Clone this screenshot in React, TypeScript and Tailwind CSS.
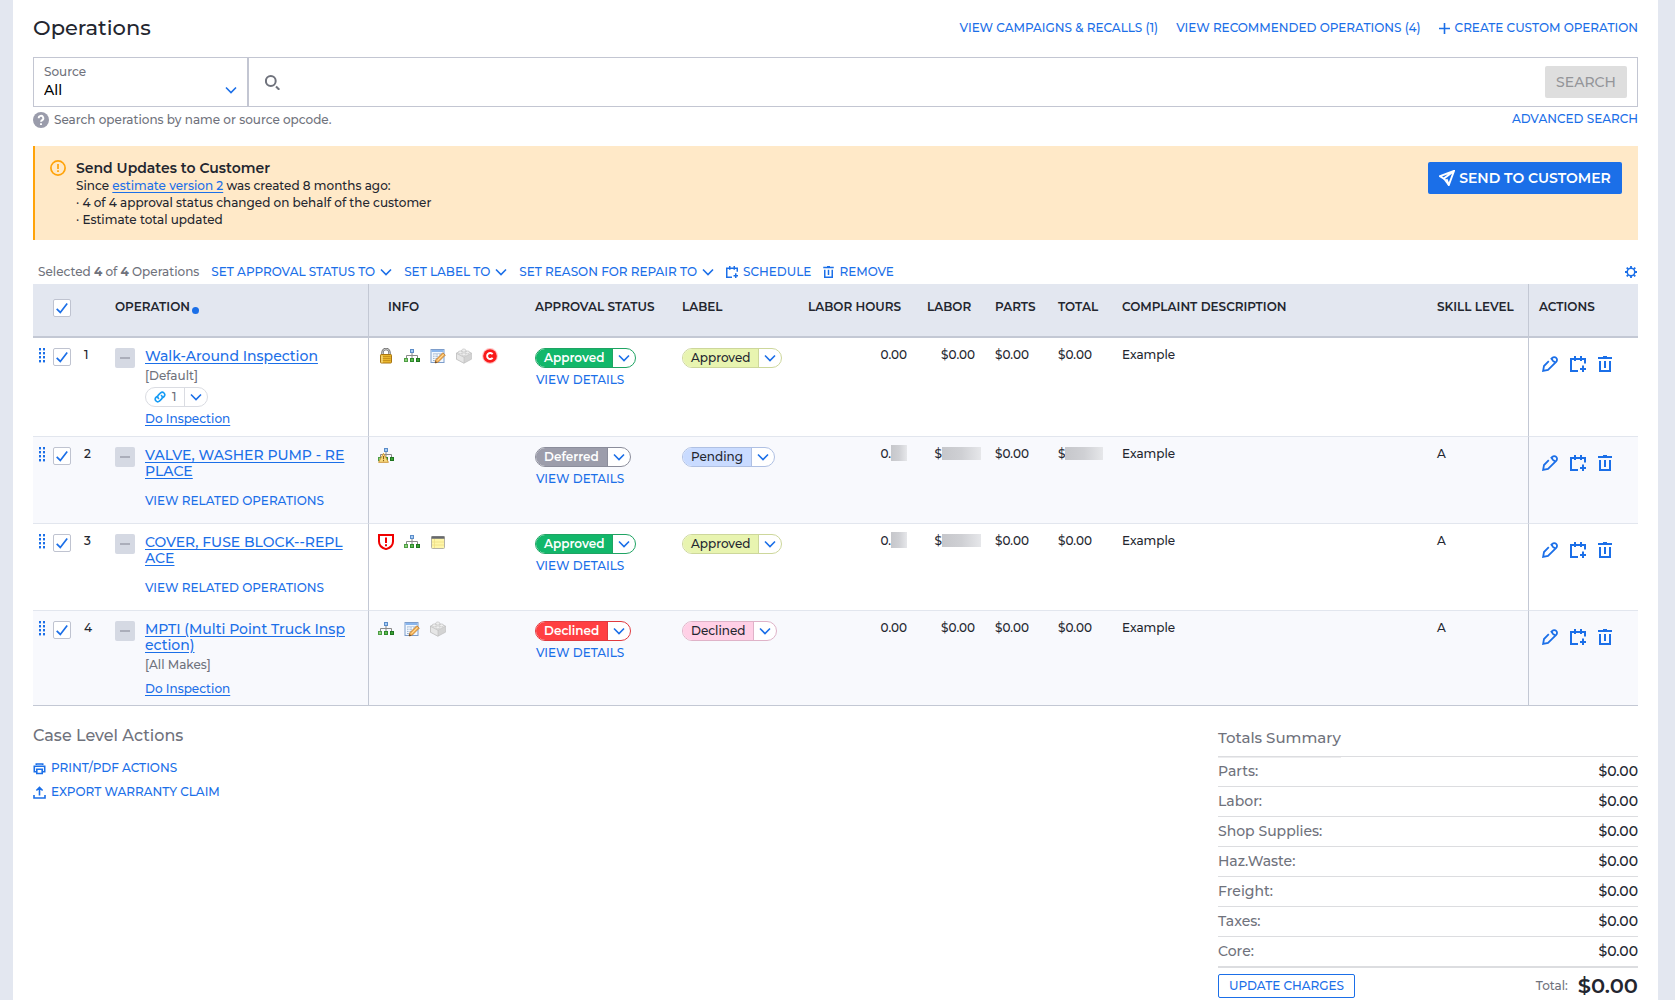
import React from "react";
import clsx from "clsx";

type InfoIcon = "lock" | "tree" | "treeWarning" | "form" | "brick" | "copyright" | "shield" | "note";
type Tone = "green" | "gray" | "red" | "lime" | "blue" | "pink";

interface Operation {
  id: number;
  title: string[];
  make?: string;
  linked?: number;
  inspection?: boolean;
  related?: boolean;
  icons: InfoIcon[];
  status: string;
  statusTone: Tone;
  label: string;
  labelTone: Tone;
  hours: string;
  labor: string;
  parts: string;
  total: string;
  skill: string;
}

const operations: Operation[] = [
  {
    id: 1,
    title: ["Walk-Around Inspection"],
    make: "[Default]",
    linked: 1,
    inspection: true,
    icons: ["lock", "tree", "form", "brick", "copyright"],
    status: "Approved",
    statusTone: "green",
    label: "Approved",
    labelTone: "lime",
    hours: "0.00",
    labor: "$0.00",
    parts: "$0.00",
    total: "$0.00",
    skill: "",
  },
  {
    id: 2,
    title: ["VALVE, WASHER PUMP - RE", "PLACE"],
    related: true,
    icons: ["treeWarning"],
    status: "Deferred",
    statusTone: "gray",
    label: "Pending",
    labelTone: "blue",
    hours: "0.",
    labor: "$",
    parts: "$0.00",
    total: "$",
    skill: "A",
  },
  {
    id: 3,
    title: ["COVER, FUSE BLOCK--REPL", "ACE"],
    related: true,
    icons: ["shield", "tree", "note"],
    status: "Approved",
    statusTone: "green",
    label: "Approved",
    labelTone: "lime",
    hours: "0.",
    labor: "$",
    parts: "$0.00",
    total: "$0.00",
    skill: "A",
  },
  {
    id: 4,
    title: ["MPTI (Multi Point Truck Insp", "ection)"],
    make: "[All Makes]",
    inspection: true,
    icons: ["tree", "form", "brick"],
    status: "Declined",
    statusTone: "red",
    label: "Declined",
    labelTone: "pink",
    hours: "0.00",
    labor: "$0.00",
    parts: "$0.00",
    total: "$0.00",
    skill: "A",
  },
];

const charges = ["Parts:", "Labor:", "Shop Supplies:", "Haz.Waste:", "Freight:", "Taxes:", "Core:"];

const tones: Record<Tone, { border: string; fill: string }> = {
  green: { border: "border-[#1fa463]", fill: "bg-[#12b76a] text-white border-[#1fa463] font-semibold" },
  gray: { border: "border-[#8b8d9b]", fill: "bg-[#9c9dab] text-white border-[#8b8d9b] font-semibold" },
  red: { border: "border-[#e0393f]", fill: "bg-[#ff3f42] text-white border-[#e0393f] font-semibold" },
  lime: { border: "border-[#cdd79b]", fill: "bg-[#e8f4b0] text-[#23262f] border-[#cdd79b]" },
  blue: { border: "border-[#afc0e3]", fill: "bg-[#c9dbff] text-[#23262f] border-[#afc0e3]" },
  pink: { border: "border-[#dfb3c8]", fill: "bg-[#ffd0e6] text-[#23262f] border-[#dfb3c8]" },
};

const Chevron = ({ className }: { className?: string }) => (
  <svg viewBox="0 0 12 12" className={clsx("w-3 h-3 flex-none", className)} fill="none" stroke="#1b6fe8" strokeWidth="1.6">
    <path d="M1 3.5 6 8.5 11 3.5" />
  </svg>
);

const EditIcon = () => (
  <svg viewBox="0 0 16 16" className="w-4 h-4" fill="none" stroke="currentColor" strokeWidth="1.8">
    <path d="M6.8 5.2 2 10 1.1 14.9 6 14l8.2-8.2a2.7 2.7 0 0 0 0-3.9 2.7 2.7 0 0 0-3.9 0L8.8 3.4" />
    <path d="M9.8 2.6c.4 2 1.6 3.2 3.6 3.6" />
  </svg>
);

const CalendarIcon = ({ className }: { className?: string }) => (
  <svg viewBox="0 0 16 16" className={className} fill="none" stroke="currentColor" strokeWidth="2">
    <path d="M8 15H1V3h14v4.5M5 0v5M11 0v5" />
    <path d="M13 9.5v6.5M10 13h6" />
  </svg>
);

const TrashIcon = ({ className }: { className?: string }) => (
  <svg viewBox="0 0 14 16" className={className} fill="none" stroke="currentColor" strokeWidth="2">
    <path d="M0 2h14M5 1h4M2 5v10h10V5M7 5v7" />
  </svg>
);

// 16px coloured icons shown in the Info column
const InfoGlyph = ({ name }: { name: InfoIcon }) => {
  const box = { viewBox: "0 0 16 16", className: "w-4 h-4" };
  switch (name) {
    case "lock":
      return (
        <svg {...box}>
          <path d="M4.500 8V4.500a3.500 3.500 0 0 1 7 0V8" fill="none" stroke="#6c6c6c" strokeWidth="2.4" />
          <path d="M4.500 8V4.500a3.500 3.500 0 0 1 7 0V8" fill="none" stroke="#d4d4d4" strokeWidth=".9" />
          <rect x="2.5" y="6.5" width="11" height="8.5" rx=".8" fill="#e9b62c" stroke="#a87512" />
          <path d="M3.5 8.5h9M3.5 10.5h9M3.5 12.5h9" stroke="#c8921a" />
          <path d="M4 7.5v7" stroke="#fae08a" strokeWidth="1.4" />
        </svg>
      );
    case "tree":
    case "treeWarning":
      return (
        <svg {...box}>
          <path d="M8 5v3M2.5 10V7.5h11V10M8 7v3" fill="none" stroke="#8a8a8a" />
          <rect x="6.5" y="1.5" width="3" height="3" fill="#a6cdf7" stroke="#5b8cc8" />
          <rect x=".5" y="10.5" width="3" height="3" fill="#8fd07c" stroke="#4e9e45" />
          <rect x="6.5" y="10.5" width="3" height="3" fill="#5fbb52" stroke="#2f8a2c" />
          <rect x="12.5" y="10.5" width="3" height="3" fill="#3ba233" stroke="#1f7420" />
          {name === "treeWarning" && (
            <>
              <path d="M5.500 6.300 10.400 15.300H.6Z" fill="#f8dc83" stroke="#cf983a" strokeLinejoin="round" />
              <path d="M5.500 9v3.200M5.500 13v1.200" stroke="#8a5f14" strokeWidth="1.1" />
            </>
          )}
        </svg>
      );
    case "form":
      return (
        <svg {...box}>
          <rect x="1" y="1.5" width="13" height="13" fill="#f2f8ff" stroke="#7d9dcb" />
          <path d="M1.5 3h12" stroke="#8ab6ee" strokeWidth="2" />
          <path d="M3 6h9M3 8.2h9M3 10.4h8M3 12.5h5" stroke="#9bb1cd" />
          <path d="M5 6v6.5M8.5 6v5" stroke="#fff" strokeWidth=".8" />
          <path d="m5 15 .8-3.200 7-7 2.500 2.300-7 7Z" fill="#f6b45a" stroke="#b8762a" strokeWidth=".8" />
          <path d="m7.5 12.5 6-6" stroke="#ffe0a0" strokeWidth=".9" />
          <path d="m5 15 .6-2 1.5 1.4Z" fill="#4d3b28" />
        </svg>
      );
    case "brick":
      return (
        <svg {...box} strokeWidth=".5" stroke="#b4b4b4">
          <path d="M.5 5.200 7.500 2l8 3.200v6L8 15.200.5 11.200Z" fill="#d3d3d3" />
          <path d="M.5 5.200 8 9v6.200L.5 11.200Z" fill="#e6e6e6" />
          <path d="m.5 5.200 7-3 8 3L8 9Z" fill="#f4f4f4" />
          <ellipse cx="7.800" cy="2.500" rx="2" ry="1.600" fill="#eee" />
          <ellipse cx="4.200" cy="4.400" rx="2" ry="1.500" fill="#eee" />
          <ellipse cx="11.600" cy="4.400" rx="2" ry="1.500" fill="#eee" />
          <ellipse cx="7.900" cy="6.400" rx="2" ry="1.500" fill="#eee" />
        </svg>
      );
    case "copyright":
      return (
        <svg {...box}>
          <circle cx="8" cy="8" r="7.900" fill="#ffc4c4" />
          <circle cx="8" cy="8" r="6.800" fill="#f91a1a" />
          <path d="M10.600 6.300A3 3 0 1 0 10.600 9.700" fill="none" stroke="#fff" strokeWidth="1.900" />
        </svg>
      );
    case "shield":
      return (
        <svg {...box} fill="none" stroke="#f00000">
          <path d="M1 1h14v6.500c0 4-3 6.500-7 7.600-4-1.100-7-3.600-7-7.600Z" strokeWidth="2" />
          <path d="M8 3.500v5.500M8 10.200v2" strokeWidth="2" />
        </svg>
      );
    case "note":
      return (
        <svg {...box}>
          <rect x="1.500" y="2.500" width="13" height="12" rx="1" fill="#fff6a8" stroke="#b5b2a5" />
          <path d="M1.500 3.500h13" stroke="#66686f" strokeWidth="2.500" />
          <path d="M2 8h12M2 11h12M4.500 5v9" stroke="#efdf86" strokeWidth=".8" />
        </svg>
      );
  }
};

const Checkbox = ({ label }: { label: string }) => (
  <label className="inline-grid w-[18px] h-[18px] flex-none">
    <input
      type="checkbox"
      defaultChecked
      aria-label={label}
      className="peer col-start-1 row-start-1 appearance-none w-[18px] h-[18px] border border-[#bfc3d0] rounded-[2px] bg-white"
    />
    <svg
      viewBox="0 0 18 18"
      className="col-start-1 row-start-1 w-[18px] h-[18px] pointer-events-none invisible peer-checked:visible"
      fill="none"
      stroke="#1b6fe8"
      strokeWidth="1.7"
    >
      <path d="m3.700 9.800 3.600 3.600L14.200 4.400" />
    </svg>
  </label>
);

const DragHandle = () => (
  <svg viewBox="0 0 6 15" className="w-1.5 h-[15px]" fill="#1b6fe8">
    {[0, 4, 8, 12].map((y) => (
      <React.Fragment key={y}>
        <rect x="0" y={y} width="2" height="2.400" />
        <rect x="4" y={y} width="2" height="2.400" />
      </React.Fragment>
    ))}
  </svg>
);

const Pill = ({ text, tone }: { text: string; tone: Tone }) => (
  <div className={clsx("inline-flex h-5 border rounded-full overflow-hidden bg-white align-top", tones[tone].border)}>
    <span className={clsx("px-2 border-r text-[12px] leading-[17px]", tones[tone].fill)}>{text}</span>
    <button aria-label={`Change ${text}`} className="w-[22px] flex items-center justify-center">
      <Chevron />
    </button>
  </div>
);

// soft grey block that hides a private amount
const Mask = ({ className }: { className: string }) => (
  <span className={clsx("inline-block align-middle bg-linear-to-r from-[#c6c7cb] via-[#cfd0d4] to-[#e6e7ea]", className)} />
);

const ActionLink = ({ children }: { children: React.ReactNode }) => (
  <button className="flex items-center gap-[5px] text-[12px] leading-4 text-[#1b6fe8]">{children}</button>
);

const th = "h-[54px] pt-3.5 px-2.5 align-top text-left text-[12px] leading-[18px] font-semibold whitespace-nowrap border-b-2 border-[#c3c8d4]";
const td = "pt-2 px-2.5 align-top text-[12px] leading-[18px] whitespace-nowrap border-b border-[#e2e6ee]";

const OperationRow = ({ item }: { item: Operation }) => (
  <tr className={clsx("group", item.id % 2 === 0 && "bg-[#f8f9fd]")}>
    <td className={clsx(td, "pl-1.5 pr-0 group-last:border-[#c3c8d4]")}>
      <div className="flex gap-2 pt-0.5">
        <DragHandle />
        <Checkbox label={`Select operation ${item.id}`} />
      </div>
    </td>
    <td className={clsx(td, "group-last:border-[#c3c8d4]")}>{item.id}</td>
    <td className={clsx(td, "border-r border-r-[#c3c8d4] pl-0 pb-2 group-last:border-b-[#c3c8d4]")}>
      <div className="flex gap-2.5 pt-0.5">
        <button aria-label="Collapse" className="w-5 h-5 flex-none flex items-center justify-center rounded-[2px] bg-[#d5d9e3]">
          <span className="w-2.5 h-0.5 bg-[#abaeba]" />
        </button>
        <div className="flex flex-col items-start leading-4">
          <a href="#" className="text-[14px] leading-4 underline underline-offset-2 text-[#1b6fe8]">
            {item.title[0]}
            {item.title[1] && (
              <>
                <br />
                {item.title[1]}
              </>
            )}
          </a>
          {item.make && <span className="mt-1 text-[#6f727c]">{item.make}</span>}
          {item.linked && (
            <div className="mt-[3px] flex h-5 border border-[#dadce2] rounded-full bg-white">
              <span className="flex items-center gap-1.5 pl-2 pr-2 border-r border-[#dadce2] text-[#6f727c]">
                <svg viewBox="0 0 14 14" className="w-3 h-3" fill="none" stroke="#169cf5" strokeWidth="1.900" strokeLinecap="round">
                  <path d="M5.300 8.700a3 3 0 0 1 0-4.200l2.400-2.400a3 3 0 0 1 4.200 4.200L10.700 7.500" />
                  <path d="M8.700 5.300a3 3 0 0 1 0 4.200l-2.400 2.400a3 3 0 0 1-4.200-4.200L3.300 6.500" />
                </svg>
                {item.linked}
              </span>
              <button aria-label="Show linked items" className="w-[22px] flex items-center justify-center">
                <Chevron />
              </button>
            </div>
          )}
          {item.inspection && (
            <a href="#" className={clsx("underline underline-offset-2 text-[#1b6fe8]", item.linked ? "mt-1 mb-px" : "mt-2")}>
              Do Inspection
            </a>
          )}
          {item.related && <button className="mt-3.5 mb-1.5 text-[#1b6fe8]">VIEW RELATED OPERATIONS</button>}
        </div>
      </div>
    </td>
    <td className={clsx(td, "pl-[9px] group-last:border-[#c3c8d4]")}>
      <div className="flex gap-2.5 pt-0.5">
        {item.icons.map((icon) => (
          <InfoGlyph key={icon} name={icon} />
        ))}
      </div>
    </td>
    <td className={clsx(td, "group-last:border-[#c3c8d4]")}>
      <div className="flex flex-col items-start pt-0.5 gap-1">
        <Pill text={item.status} tone={item.statusTone} />
        <button className="pl-px leading-4 text-[#1b6fe8]">VIEW DETAILS</button>
      </div>
    </td>
    <td className={clsx(td, "group-last:border-[#c3c8d4]")}>
      <div className="pt-0.5">
        <Pill text={item.label} tone={item.labelTone} />
      </div>
    </td>
    <td className={clsx(td, "text-right group-last:border-[#c3c8d4]")}>
      {item.hours}
      {item.hours === "0." && <Mask className="w-4 h-4 -mt-1" />}
    </td>
    <td className={clsx(td, "text-right group-last:border-[#c3c8d4]", item.labor === "$" && "pr-1")}>
      {item.labor}
      {item.labor === "$" && <Mask className="w-[39px] h-[13px] -mt-0.5" />}
    </td>
    <td className={clsx(td, "group-last:border-[#c3c8d4]")}>{item.parts}</td>
    <td className={clsx(td, "pr-0 group-last:border-[#c3c8d4]")}>
      {item.total}
      {item.total === "$" && <Mask className="w-[38px] h-[13px] -mt-0.5" />}
    </td>
    <td className={clsx(td, "group-last:border-[#c3c8d4]")}>Example</td>
    <td className={clsx(td, "group-last:border-[#c3c8d4]")}>{item.skill}</td>
    <td className={clsx(td, "border-l border-l-[#c3c8d4] group-last:border-b-[#c3c8d4]")}>
      <div className="flex gap-3 pt-2.5 pl-[3px] text-[#1b6fe8]">
        <button aria-label="Edit">
          <EditIcon />
        </button>
        <button aria-label="Schedule">
          <CalendarIcon className="w-4 h-4" />
        </button>
        <button aria-label="Remove">
          <TrashIcon className="w-3.5 h-4" />
        </button>
      </div>
    </td>
  </tr>
);

export default function App() {
  return (
    <div className="min-h-screen bg-[#e3e7f0] pl-[13px] pr-[17px] font-['Montserrat','Inter',sans-serif] font-medium text-[#23262f]">
      <main className="min-h-screen bg-white px-5 pt-3">
        <header className="flex items-center justify-between h-8">
          <h1 className="text-[21px] leading-8 font-medium">Operations</h1>
          <nav className="flex items-center gap-[18px] text-[12px] text-[#1b6fe8]">
            <a href="#">VIEW CAMPAIGNS &amp; RECALLS (1)</a>
            <a href="#">VIEW RECOMMENDED OPERATIONS (4)</a>
            <a href="#" className="flex items-center gap-[5px]">
              <svg viewBox="0 0 11 11" className="w-[11px] h-[11px]" stroke="currentColor" strokeWidth="1.600">
                <path d="M5.500 0v11M0 5.500h11" />
              </svg>
              CREATE CUSTOM OPERATION
            </a>
          </nav>
        </header>

        <form className="mt-[13px] flex h-[50px] border border-[#c3c6d2]">
          <label className="w-[215px] flex-none border-r-2 border-[#c3c6d2] pl-2.5 pr-2.5 pt-1.5">
            <span className="block text-[12px] leading-4 text-[#6f727c]">Source</span>
            <span className="grid items-center">
              <select className="col-start-1 row-start-1 appearance-none w-full text-[14px] leading-5 font-medium text-black">
                <option>All</option>
              </select>
              <Chevron className="col-start-1 row-start-1 justify-self-end pointer-events-none" />
            </span>
          </label>
          <div className="flex flex-1 items-center pl-4 pr-2.5">
            <svg viewBox="0 0 15 15" className="w-[15px] h-[15px] flex-none" fill="none" stroke="#6f727c" strokeWidth="2">
              <circle cx="5.800" cy="6" r="4.900" />
              <path d="m11 11.500 3.300 3.300" />
            </svg>
            <input type="text" aria-label="Search operations" className="flex-1 h-8 px-3 text-sm outline-none" />
            <button disabled className="w-[82px] h-8 rounded-[2px] bg-[#dedede] text-[14px] text-[#949599]">
              SEARCH
            </button>
          </div>
        </form>

        <div className="mt-1 flex justify-between">
          <p className="flex items-center gap-[5px] h-[18px] text-[12px] text-[#6f727c]">
            <svg viewBox="0 0 16 16" className="w-4 h-4">
              <circle cx="8" cy="8" r="8" fill="#9a9cab" />
              <path d="M5.700 6.200a2.300 2.300 0 1 1 3.500 1.900C8.300 8.700 8 9 8 9.800M8 11.200v1.700" fill="none" stroke="#fff" strokeWidth="1.900" />
            </svg>
            Search operations by name or source opcode.
          </p>
          <a href="#" className="text-[12px] leading-4 text-[#1b6fe8]">
            ADVANCED SEARCH
          </a>
        </div>

        <section className="mt-[17px] flex min-h-[94px] border-l-2 border-[#ffa30a] bg-[#ffe9c8] pt-3.5 pl-[15px] pr-4">
          <svg viewBox="0 0 16 16" className="w-4 h-4 flex-none" fill="none" stroke="#ffa30a" strokeWidth="1.700">
            <circle cx="8" cy="8" r="7.100" />
            <path d="M8 3.900v5M8 10.200v1.900" />
          </svg>
          <div className="pl-2.5 flex-1 text-[12px] leading-[17px]">
            <h2 className="text-[14px] leading-[17px] font-semibold">Send Updates to Customer</h2>
            <p>
              Since{" "}
              <a href="#" className="underline underline-offset-2 text-[#1b6fe8]">
                estimate version 2
              </a>{" "}
              was created 8 months ago:
            </p>
            <p>· 4 of 4 approval status changed on behalf of the customer</p>
            <p>· Estimate total updated</p>
          </div>
          <button className="mt-0.5 flex h-8 w-[194px] items-center justify-center gap-1 rounded-[2px] bg-[#1b6fe8] text-[14px] font-semibold text-white">
            <svg viewBox="0 0 16 16" className="w-4 h-4" fill="none" stroke="currentColor" strokeWidth="1.900">
              <path d="M15 1 1 6.200l3.800 2.300L15 1 9.800 15 7.600 9.200" />
              <path d="M5 8.500 9.800 15" />
            </svg>
            SEND TO CUSTOMER
          </button>
        </section>

        <div className="mt-[22px] mb-0.5 h-5 flex items-center gap-3 pl-[5px]">
          <span className="text-[12px] text-[#6f727c]">
            Selected <b>4</b> of <b>4</b> Operations
          </span>
          <ActionLink>
            SET APPROVAL STATUS TO <Chevron />
          </ActionLink>
          <ActionLink>
            SET LABEL TO <Chevron />
          </ActionLink>
          <ActionLink>
            SET REASON FOR REPAIR TO <Chevron />
          </ActionLink>
          <ActionLink>
            <CalendarIcon className="w-3 h-3" /> SCHEDULE
          </ActionLink>
          <ActionLink>
            <TrashIcon className="w-[11px] h-3" /> REMOVE
          </ActionLink>
          <button aria-label="Table settings" className="ml-auto mr-px text-[#1b6fe8]">
            <svg viewBox="0 0 16 16" className="w-3 h-3" fill="none" stroke="currentColor">
              <circle cx="8" cy="8" r="5" strokeWidth="2" />
              <path
                d="M8 0v3M8 13v3M0 8h3M13 8h3M2.300 2.300l2 2M11.700 11.700l2 2M2.300 13.700l2-2M11.700 4.300l2-2"
                strokeWidth="2.400"
              />
            </svg>
          </button>
        </div>

        <table className="w-full table-fixed border-separate border-spacing-0">
          <colgroup>
            <col className="w-[41px]" />
            <col className="w-[41px]" />
            <col className="w-[254px]" />
            <col className="w-[156px]" />
            <col className="w-[147px]" />
            <col className="w-[126px]" />
            <col className="w-[119px]" />
            <col className="w-[68px]" />
            <col className="w-[63px]" />
            <col className="w-[64px]" />
            <col />
            <col className="w-[101px]" />
            <col className="w-[110px]" />
          </colgroup>
          <thead className="bg-[#e3e7f0]">
            <tr>
              <th className={clsx(th, "pl-5 pr-0")}>
                <span className="flex pt-px">
                  <Checkbox label="Select all operations" />
                </span>
              </th>
              <th className={th} />
              <th className={clsx(th, "pl-0 border-r border-r-[#c3c8d4]")}>
                <span className="flex items-end gap-0.5">
                  OPERATION
                  <i className="mb-0.5 w-[7px] h-[7px] rounded-full bg-[#1b6fe8]" />
                </span>
              </th>
              <th className={clsx(th, "pl-[19px]")}>INFO</th>
              <th className={th}>APPROVAL STATUS</th>
              <th className={th}>LABEL</th>
              <th className={th}>LABOR HOURS</th>
              <th className={th}>LABOR</th>
              <th className={th}>PARTS</th>
              <th className={th}>TOTAL</th>
              <th className={th}>COMPLAINT DESCRIPTION</th>
              <th className={th}>SKILL LEVEL</th>
              <th className={clsx(th, "border-l border-l-[#c3c8d4]")}>ACTIONS</th>
            </tr>
          </thead>
          <tbody>
            {operations.map((item) => (
              <OperationRow key={item.id} item={item} />
            ))}
          </tbody>
        </table>

        <div className="flex items-start justify-between pt-5">
          <section>
            <h2 className="text-[16px] leading-5 font-medium text-[#6f727c]">Case Level Actions</h2>
            <div className="mt-3.5 flex flex-col items-start gap-2">
              <ActionLink>
                <svg viewBox="0 0 13 13" className="w-[13px] h-[13px]" fill="none" stroke="currentColor" strokeWidth="1.600">
                  <path d="M3.300 3V2h6.400v1M3 9.700H1.300V4.200h10.400v5.500H10" />
                  <path d="M3.800 7.300h5.400v4.200H3.800Z" />
                </svg>
                PRINT/PDF ACTIONS
              </ActionLink>
              <ActionLink>
                <svg viewBox="0 0 13 13" className="w-[13px] h-[13px]" fill="none" stroke="currentColor" strokeWidth="1.600">
                  <path d="M6.500 9.500V1.600M3.400 4.500l3.100-3.100 3.100 3.100M1 9v3h11V9" />
                </svg>
                EXPORT WARRANTY CLAIM
              </ActionLink>
            </div>
          </section>

          <section className="w-[420px]">
            <div className="h-[31px] border-b border-[#dcdde0]">
              <h2 className="inline-block h-[30px] border-b border-[#ececee] text-[15px] leading-5 font-medium text-[#6f727c]">
                Totals Summary
              </h2>
            </div>
            <dl className="border-b border-[#dcdde0]">
              {charges.map((name) => (
                <div key={name} className="flex justify-between h-[30px] border-b border-[#dcdde0] text-[14px] leading-[29px]">
                  <dt className="text-[#6f727c]">{name}</dt>
                  <dd>$0.00</dd>
                </div>
              ))}
            </dl>
            <div className="flex items-center pt-1.5">
              <button className="h-6 w-[137px] border border-[#1b6fe8] rounded-[2px] text-[12px] text-[#1b6fe8]">UPDATE CHARGES</button>
              <span className="ml-auto text-[12px] text-[#6f727c]">Total:</span>
              <span className="ml-2.5 text-[21px] leading-6 font-semibold">$0.00</span>
            </div>
          </section>
        </div>
      </main>
    </div>
  );
}
